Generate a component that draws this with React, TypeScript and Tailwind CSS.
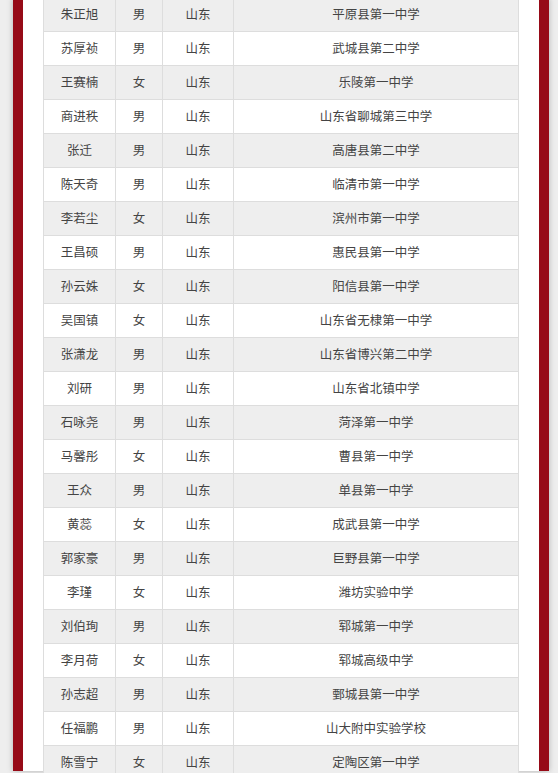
import React from 'react';

type Row = { name: string; gender: string; province: string; school: string };

const rows: Row[] = [
  { name: '朱正旭', gender: '男', province: '山东', school: '平原县第一中学' },
  { name: '苏厚祯', gender: '男', province: '山东', school: '武城县第二中学' },
  { name: '王赛楠', gender: '女', province: '山东', school: '乐陵第一中学' },
  { name: '商进秩', gender: '男', province: '山东', school: '山东省聊城第三中学' },
  { name: '张迁', gender: '男', province: '山东', school: '高唐县第二中学' },
  { name: '陈天奇', gender: '男', province: '山东', school: '临清市第一中学' },
  { name: '李若尘', gender: '女', province: '山东', school: '滨州市第一中学' },
  { name: '王昌硕', gender: '男', province: '山东', school: '惠民县第一中学' },
  { name: '孙云姝', gender: '女', province: '山东', school: '阳信县第一中学' },
  { name: '吴国镇', gender: '女', province: '山东', school: '山东省无棣第一中学' },
  { name: '张潇龙', gender: '男', province: '山东', school: '山东省博兴第二中学' },
  { name: '刘研', gender: '男', province: '山东', school: '山东省北镇中学' },
  { name: '石咏尧', gender: '男', province: '山东', school: '菏泽第一中学' },
  { name: '马馨彤', gender: '女', province: '山东', school: '曹县第一中学' },
  { name: '王众', gender: '男', province: '山东', school: '单县第一中学' },
  { name: '黄蕊', gender: '女', province: '山东', school: '成武县第一中学' },
  { name: '郭家豪', gender: '男', province: '山东', school: '巨野县第一中学' },
  { name: '李瑾', gender: '女', province: '山东', school: '潍坊实验中学' },
  { name: '刘伯珣', gender: '男', province: '山东', school: '郓城第一中学' },
  { name: '李月荷', gender: '女', province: '山东', school: '郓城高级中学' },
  { name: '孙志超', gender: '男', province: '山东', school: '鄄城县第一中学' },
  { name: '任福鹏', gender: '男', province: '山东', school: '山大附中实验学校' },
  { name: '陈雪宁', gender: '女', province: '山东', school: '定陶区第一中学' },
];

const cell = 'flex items-center justify-center border-r border-[#dddddd]';

const App: React.FC = () => {
  return (
    <div
      className="h-[773px] overflow-hidden bg-[#eeeeee] pl-[13px] pr-[9px] text-[#444444]"
      style={{ fontFamily: '"Noto Sans CJK SC", "Noto Sans", sans-serif' }}
    >
      <div className="h-full border-x-[10px] border-[#960a17] bg-white px-[20px] shadow-[0_0_6px_rgba(0,0,0,0.25)]">
        <div className="-mt-[2px] border-l border-[#dddddd] text-[12.5px]">
          {rows.map((r, i) => (
            <div
              key={r.name}
              className={`flex h-[34px] border-b border-[#dddddd] ${i % 2 === 0 ? 'bg-[#eeeeee]' : 'bg-white'}`}
            >
              <div className={`${cell} w-[72px]`}>{r.name}</div>
              <div className={`${cell} w-[47px]`}>{r.gender}</div>
              <div className={`${cell} w-[71px]`}>{r.province}</div>
              <div className={`${cell} flex-1`}>{r.school}</div>
            </div>
          ))}
        </div>
      </div>
    </div>
  );
};

export default App;
